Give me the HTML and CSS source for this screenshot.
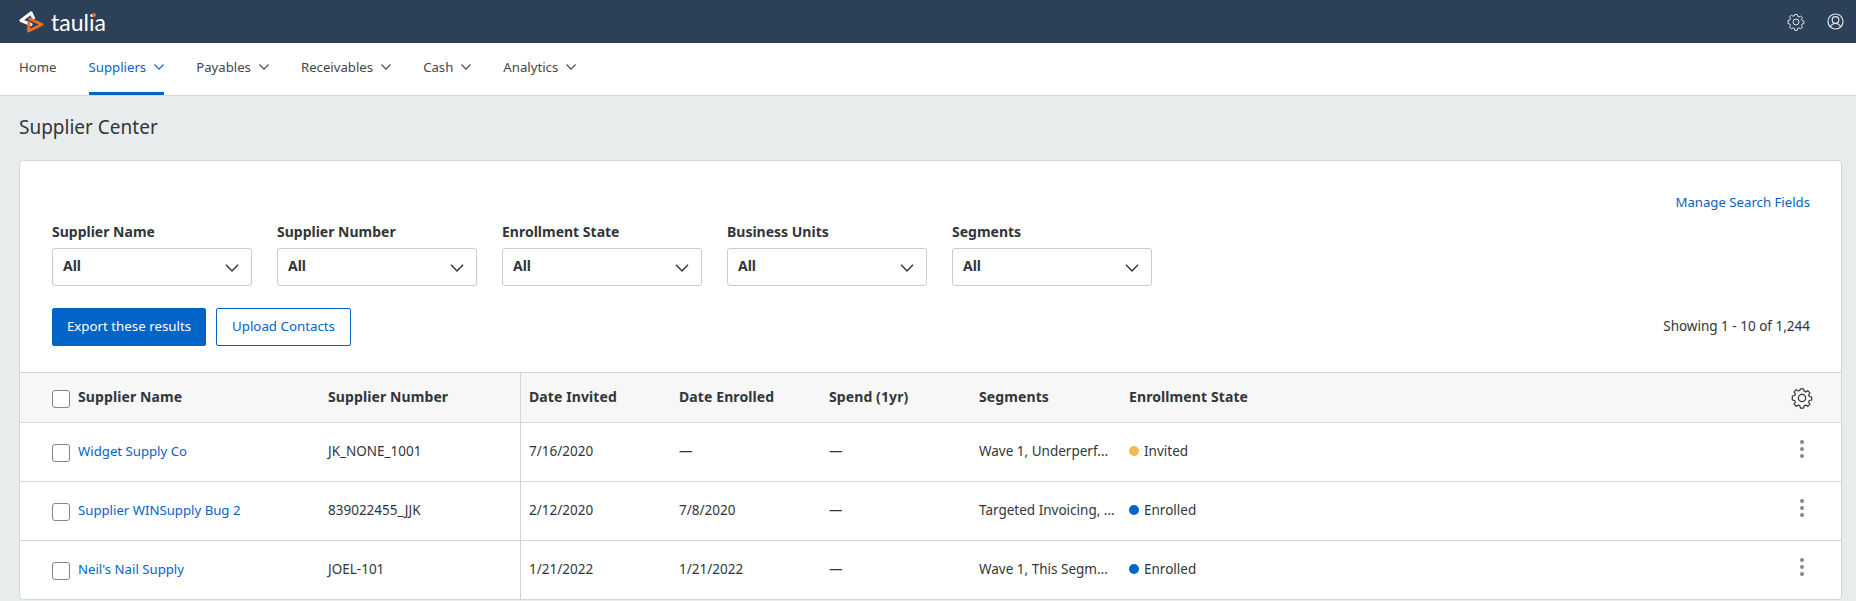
FILE: index.html
```html
<!DOCTYPE html>
<html lang="en">
<head>
    <meta charset="UTF-8">
    <title>Supplier Center - Taulia</title>
    <link rel="stylesheet" href="styles.css">
</head>
<body>
    <svg class="sprite" width="0" height="0">
        <symbol id="chev" viewBox="0 0 10 6">
            <path d="M.5.5 5 5.2 9.5.5" fill="none" stroke="currentColor" stroke-width="1.1"/>
        </symbol>
        <symbol id="gear" viewBox="0 0 20 20">
            <path d="M8.4 1.2h3.2l.5 2.4 1.6.7 2.1-1.3 2.2 2.2-1.3 2.1.7 1.6 2.4.5v3.1l-2.4.5-.7 1.6 1.3 2.1-2.2 2.2-2.1-1.3-1.6.7-.5 2.4H8.4l-.5-2.4-1.6-.7-2.1 1.300-2.200-2.200 1.300-2.100-.7-1.600-2.400-.5V8.400l2.400-.5.7-1.600-1.300-2.100 2.200-2.200 2.100 1.300 1.600-.7z" transform="translate(1 .6) scale(.9)" fill="none" stroke="currentColor" stroke-width="1.200" stroke-linejoin="round"/>
            <circle cx="10" cy="10" r="3.3" fill="none" stroke="currentColor" stroke-width="1.1"/>
        </symbol>
    </svg>

    <header class="topbar">
        <div class="brand">
            <svg class="brand-mark" width="26" height="22" viewBox="0 0 26 22">
                <path d="M12 2 2 9.500l10 4" fill="none" stroke="#fff" stroke-width="3" stroke-linejoin="round" stroke-linecap="round"/>
                <path d="M12 2 14.500 7" fill="none" stroke="#fff" stroke-width="3" stroke-linecap="round"/>
                <path d="M10 11.500 9.500 20 23 13.500 11 8" fill="none" stroke="#f26a21" stroke-width="3" stroke-linejoin="round" stroke-linecap="round"/>
            </svg>
            <span class="brand-name">taulia<i class="brand-dot"></i></span>
        </div>
        <div class="topbar-icons">
            <svg class="top-icon" width="18" height="18"><use href="#gear"/></svg>
            <svg class="top-icon" width="17" height="17" viewBox="0 0 17 17">
                <circle cx="8.5" cy="8.5" r="7.5" fill="none" stroke="currentColor" stroke-width="1.2"/>
                <circle cx="8.5" cy="7" r="3.3" fill="none" stroke="currentColor" stroke-width="1.2"/>
                <path d="M3.5 14c.8-2.500 2.600-3.500 5-3.500s4.200 1 5 3.500" fill="none" stroke="currentColor" stroke-width="1.2"/>
            </svg>
        </div>
    </header>

    <nav class="mainnav">
        <a class="nav-item">Home</a>
        <a class="nav-item active">Suppliers <svg class="nav-chev"><use href="#chev"/></svg></a>
        <a class="nav-item">Payables <svg class="nav-chev"><use href="#chev"/></svg></a>
        <a class="nav-item">Receivables <svg class="nav-chev"><use href="#chev"/></svg></a>
        <a class="nav-item">Cash <svg class="nav-chev"><use href="#chev"/></svg></a>
        <a class="nav-item">Analytics <svg class="nav-chev"><use href="#chev"/></svg></a>
    </nav>

    <main class="page">
        <h1 class="page-title">Supplier Center</h1>

        <section class="card">
            <div class="manage-row">
                <a class="link">Manage Search Fields</a>
            </div>

            <div class="filters">
                <div class="filter">
                    <label>Supplier Name</label>
                    <div class="select">All <svg class="select-chev"><use href="#chev"/></svg></div>
                </div>
                <div class="filter">
                    <label>Supplier Number</label>
                    <div class="select">All <svg class="select-chev"><use href="#chev"/></svg></div>
                </div>
                <div class="filter">
                    <label>Enrollment State</label>
                    <div class="select">All <svg class="select-chev"><use href="#chev"/></svg></div>
                </div>
                <div class="filter">
                    <label>Business Units</label>
                    <div class="select">All <svg class="select-chev"><use href="#chev"/></svg></div>
                </div>
                <div class="filter">
                    <label>Segments</label>
                    <div class="select">All <svg class="select-chev"><use href="#chev"/></svg></div>
                </div>
            </div>

            <div class="actions">
                <button class="btn btn-primary">Export these results</button>
                <button class="btn btn-outline">Upload Contacts</button>
                <span class="showing">Showing 1 - 10 of 1,244</span>
            </div>

            <div class="table">
                <div class="row head">
                    <div class="cell name"><span class="check"></span>Supplier Name</div>
                    <div class="cell number">Supplier Number</div>
                    <div class="cell col">Date Invited</div>
                    <div class="cell col">Date Enrolled</div>
                    <div class="cell col">Spend (1yr)</div>
                    <div class="cell col">Segments</div>
                    <div class="cell col">Enrollment State</div>
                    <div class="cell tail"><svg class="table-gear"><use href="#gear"/></svg></div>
                </div>
                <div class="row">
                    <div class="cell name"><span class="check"></span><a class="link">Widget Supply Co</a></div>
                    <div class="cell number">JK_NONE_1001</div>
                    <div class="cell col">7/16/2020</div>
                    <div class="cell col">—</div>
                    <div class="cell col">—</div>
                    <div class="cell col">Wave 1, Underperf...</div>
                    <div class="cell col"><span class="dot invited"></span>Invited</div>
                    <div class="cell tail"><span class="kebab"><i></i><i></i><i></i></span></div>
                </div>
                <div class="row">
                    <div class="cell name"><span class="check"></span><a class="link">Supplier WINSupply Bug 2</a></div>
                    <div class="cell number">839022455_JJK</div>
                    <div class="cell col">2/12/2020</div>
                    <div class="cell col">7/8/2020</div>
                    <div class="cell col">—</div>
                    <div class="cell col">Targeted Invoicing, ...</div>
                    <div class="cell col"><span class="dot enrolled"></span>Enrolled</div>
                    <div class="cell tail"><span class="kebab"><i></i><i></i><i></i></span></div>
                </div>
                <div class="row">
                    <div class="cell name"><span class="check"></span><a class="link">Neil's Nail Supply</a></div>
                    <div class="cell number">JOEL-101</div>
                    <div class="cell col">1/21/2022</div>
                    <div class="cell col">1/21/2022</div>
                    <div class="cell col">—</div>
                    <div class="cell col">Wave 1, This Segm...</div>
                    <div class="cell col"><span class="dot enrolled"></span>Enrolled</div>
                    <div class="cell tail"><span class="kebab"><i></i><i></i><i></i></span></div>
                </div>
            </div>
        </section>
    </main>
</body>
</html>
```

FILE: styles.css
```css
html, body {
    height: 100%;
    overflow: hidden;
}

body {
    margin: 0;
    background-color: #e8ecec;
    font-family: "Noto Sans", Arial, sans-serif;
    font-size: 13.5px;
    color: #32363a;
}

.sprite {
    position: absolute;
}

.topbar {
    height: 43px;
    padding: 0 12px 0 19px;
    background-color: #2c4158;
    display: flex;
    align-items: center;
    justify-content: space-between;
}

.brand {
    display: flex;
    align-items: center;
    gap: 6px;
}

.brand-name {
    position: relative;
    font-family: Lato, sans-serif;
    font-weight: 400;
    font-size: 23px;
    color: #fff;
}

.brand-dot {
    position: absolute;
    right: 10px;
    top: 5px;
    width: 4px;
    height: 4px;
    border-radius: 50%;
    background-color: #f26a21;
}

.topbar-icons {
    display: flex;
    align-items: center;
    gap: 22px;
    color: #e6eaed;
}

.mainnav {
    height: 52px;
    padding-left: 19px;
    background-color: #fff;
    border-bottom: 1px solid #d5d9dc;
    display: flex;
    gap: 32px;
    font-size: 13.2px;
}

.nav-item {
    display: flex;
    align-items: center;
    gap: 8px;
    padding-bottom: 2px;
    color: #42464a;
    border-bottom: 3px solid transparent;
}

.nav-item.active {
    color: #0563c9;
    border-bottom-color: #0064c8;
}

.nav-chev {
    width: 10px;
    height: 6px;
}

.page {
    padding: 0 14px 0 19px;
}

.page-title {
    margin: 0;
    height: 64px;
    line-height: 62px;
    font-size: 19px;
    font-weight: 400;
}

.card {
    background-color: #fff;
    border: 1px solid #d5d5d5;
    border-radius: 4px;
}

.link {
    color: #0563c9;
    font-size: 13.2px;
}

.manage-row {
    padding: 31px 31px 0;
    display: flex;
    justify-content: flex-end;
    height: 22px;
    line-height: 20px;
}

.filters {
    display: flex;
    gap: 25px;
    padding: 8px 32px 0;
}

.filter {
    width: 200px;
}

.filter label {
    display: block;
    font-size: 14px;
    font-weight: 700;
    line-height: 20px;
    margin-bottom: 6px;
}

.select {
    height: 38px;
    box-sizing: border-box;
    border: 1px solid #c8ccd0;
    border-radius: 3px;
    padding: 0 10px 4px;
    font-size: 14px;
    font-weight: 700;
    display: flex;
    align-items: center;
    justify-content: space-between;
}

.select-chev {
    width: 14px;
    height: 8px;
    margin: 6px 2px 0 0;
    color: #32363a;
}

.actions {
    display: flex;
    align-items: center;
    gap: 10px;
    padding: 22px 31px 26px 32px;
}

.btn {
    height: 38px;
    box-sizing: border-box;
    border-radius: 2px;
    font-family: inherit;
    font-size: 13.3px;
    padding: 0 0 2px;
}

.btn-primary {
    width: 154px;
    background-color: #0064c8;
    border: 1px solid #0064c8;
    color: #fff;
}

.btn-outline {
    width: 135px;
    background-color: #fff;
    border: 1px solid #0563c9;
    color: #0563c9;
}

.showing {
    margin-left: auto;
    padding-bottom: 3px;
}

.row {
    height: 59px;
    box-sizing: border-box;
    border-top: 1px solid #d5d5d5;
    display: flex;
    align-items: stretch;
}

.row.head {
    height: 50px;
    background-color: #f7f7f7;
    font-size: 14px;
    font-weight: 700;
    letter-spacing: .1px;
}

.cell {
    display: flex;
    align-items: center;
    white-space: nowrap;
    box-sizing: border-box;
    padding-bottom: 2px;
}

.name {
    width: 277px;
    padding-left: 32px;
}

.number {
    width: 224px;
    padding-left: 31px;
    border-right: 1px solid #d5d5d5;
}

.col {
    width: 150px;
    padding-left: 8px;
}

.tail {
    flex: 1;
    justify-content: flex-end;
    padding: 0 28px 0 0;
}

.check {
    width: 18px;
    height: 18px;
    box-sizing: border-box;
    border: 1px solid #80858a;
    border-radius: 3px;
    background-color: #fff;
    margin: 4px 8px 0 0;
    flex-shrink: 0;
}

.table-gear {
    width: 22px;
    height: 22px;
    color: #32363a;
}

.kebab {
    display: flex;
    flex-direction: column;
    gap: 3px;
    margin: 0 9px 6px 0;
}

.kebab i {
    display: block;
    width: 4px;
    height: 4px;
    border-radius: 50%;
    background-color: #85898d;
}

.dot {
    width: 10px;
    height: 10px;
    border-radius: 50%;
    margin-right: 5px;
}

.dot.invited {
    background-color: #f3b84f;
}

.dot.enrolled {
    background-color: #0064c8;
}
```
